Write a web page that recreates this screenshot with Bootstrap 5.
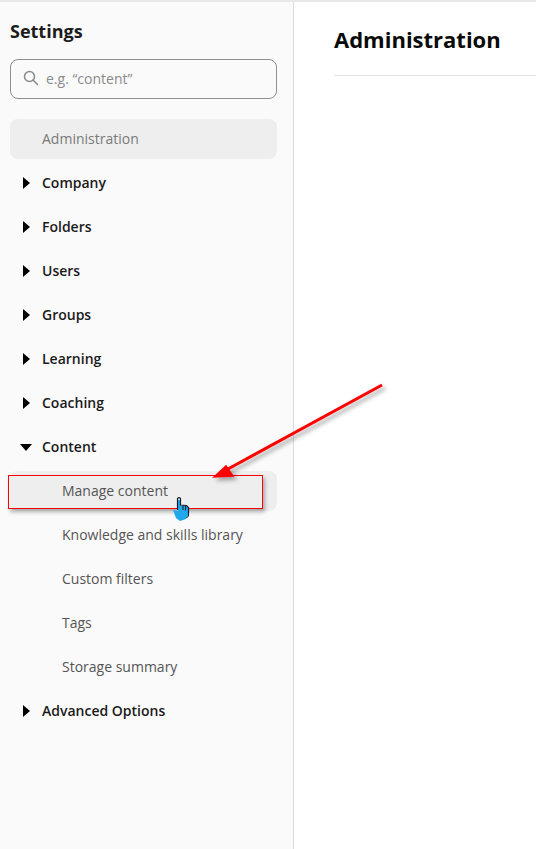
<!DOCTYPE html>
<html lang="en">
<head>
    <meta charset="UTF-8">
    <meta name="viewport" content="width=device-width, initial-scale=1.0">
    <title>Settings - Administration</title>
    <link href="https://cdn.jsdelivr.net/npm/bootstrap@5.3.0/dist/css/bootstrap.min.css" rel="stylesheet">
    <script src="https://cdn.jsdelivr.net/npm/bootstrap@5.3.0/dist/js/bootstrap.bundle.min.js"></script>
    <style>
        html, body { height: 100%; overflow: hidden; }
        body { font-family: "Open Sans", "Liberation Sans", sans-serif; font-size: 14px; background: #fff; color: #000; position: relative; }
        .page-wrap { height: 100%; border-top: 2px solid #e8e8e8; }
        .side-panel { width: 294px; flex: none; background: #fafafa; border-right: 1px solid #dcdcdc; padding: 17px 16px 0 10px; }
        .side-title { font-size: 18px; font-weight: 700; line-height: 25px; color: #1c1c1c; margin: 0 0 15px; }
        .search-box { height: 40px; border: 1px solid #8f8f8f; border-radius: 8px; padding: 0 0 2px 12px; gap: 7px; margin-bottom: 20px; }
        .search-box input { border: 0; outline: 0; background: transparent; padding: 0; width: 200px; font-size: 14px; color: #333; }
        .search-box input::placeholder { color: #8a8a8a; opacity: 1; }
        .menu-list { gap: 4px; }
        .menu-row { height: 40px; padding: 0 0 2px 32px; border-radius: 8px; position: relative; font-weight: 600; color: #1a1a1a; font-size: 14px; }
        .menu-row.is-current { background: #eee; color: #7a7a7a; font-weight: 400; }
        .menu-row.sub-row { padding-left: 52px; font-weight: 400; color: #555; }
        .menu-row.is-hover { background: #eee; }
        .caret-r { position: absolute; left: 13px; top: 14px; border-left: 7px solid #000; border-top: 6px solid transparent; border-bottom: 6px solid transparent; }
        .caret-d { position: absolute; left: 10px; top: 17px; border-top: 7px solid #000; border-left: 6.500px solid transparent; border-right: 6.500px solid transparent; }
        .main-panel { padding: 22px 0 0 40px; }
        .main-title { font-size: 22px; font-weight: 700; line-height: 30px; color: #0a0a0a; padding-bottom: 21px; margin: 0; border-bottom: 1px solid #e4e4e4; }
        .mark-box { position: absolute; left: 8px; top: 475px; width: 255px; height: 34px; border: 1px solid #f00; box-shadow: 2px 3px 4px rgba(0,0,0,.3); }
        .mark-overlay { position: absolute; left: 0; top: 0; pointer-events: none; }
    </style>
</head>
<body>
    <div class="page-wrap d-flex">
        <aside class="side-panel">
            <h1 class="side-title">Settings</h1>
            <div class="search-box d-flex align-items-center">
                <svg width="16" height="16" viewBox="0 0 16 16" fill="none" stroke="#8a8a8a" stroke-width="1.5"><circle cx="6.500" cy="6.500" r="5"/><path d="M10.200 10.200 14.500 14.500" stroke-linecap="round"/></svg>
                <input type="text" placeholder="e.g. “content”">
            </div>
            <div class="menu-list d-flex flex-column">
                <div class="menu-row is-current d-flex align-items-center">Administration</div>
                <div class="menu-row d-flex align-items-center"><span class="caret-r"></span>Company</div>
                <div class="menu-row d-flex align-items-center"><span class="caret-r"></span>Folders</div>
                <div class="menu-row d-flex align-items-center"><span class="caret-r"></span>Users</div>
                <div class="menu-row d-flex align-items-center"><span class="caret-r"></span>Groups</div>
                <div class="menu-row d-flex align-items-center"><span class="caret-r"></span>Learning</div>
                <div class="menu-row d-flex align-items-center"><span class="caret-r"></span>Coaching</div>
                <div class="menu-row d-flex align-items-center"><span class="caret-d"></span>Content</div>
                <div class="menu-row sub-row is-hover d-flex align-items-center">Manage content</div>
                <div class="menu-row sub-row d-flex align-items-center">Knowledge and skills library</div>
                <div class="menu-row sub-row d-flex align-items-center">Custom filters</div>
                <div class="menu-row sub-row d-flex align-items-center">Tags</div>
                <div class="menu-row sub-row d-flex align-items-center">Storage summary</div>
                <div class="menu-row d-flex align-items-center"><span class="caret-r"></span>Advanced Options</div>
            </div>
        </aside>
        <main class="main-panel flex-grow-1">
            <h2 class="main-title">Administration</h2>
        </main>
    </div>

    <div class="mark-box"></div>
    <svg class="mark-overlay" width="536" height="849" viewBox="0 0 536 849">
        <defs>
            <filter id="dropShade" x="-20%" y="-20%" width="150%" height="150%">
                <feDropShadow dx="3" dy="3" stdDeviation="2" flood-color="#000" flood-opacity=".35"/>
            </filter>
        </defs>
        <g filter="url(#dropShade)">
            <path d="M382 385 228 469" stroke="#f00" stroke-width="3" fill="none"/>
            <path d="M214 477 226 466 233 476 Z" fill="#f00" stroke="#f00" stroke-width="1.500"/>
        </g>
        <!-- hand cursor -->
        <path d="M173 510l5 1v-11h3v6h6l2 2v6l-3 5-6 2-4-3Z" fill="#1fa8ea"/>
        <path d="M177.500 510V498.500q1.500-1.500 3 0V505l6 .5 2 2v6" fill="none" stroke="#10202c" stroke-width="1.200"/>
        <path d="M183 505v5M185.500 505.500v5" stroke="#10202c" stroke-width="1"/>
        <path d="M188.500 511v5l-2 2" fill="none" stroke="#10202c" stroke-width="1"/>
    </svg>
</body>
</html>
